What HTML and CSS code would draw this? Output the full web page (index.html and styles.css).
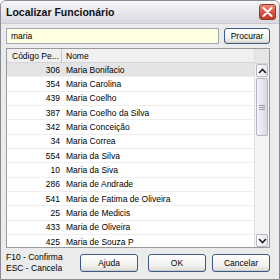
FILE: index.html
```html
<!DOCTYPE html>
<html lang="pt">
<head>
<meta charset="utf-8">
<title>Localizar Funcionário</title>
<link rel="stylesheet" href="styles.css">
</head>
<body>
<div class="window">
  <div class="titlebar">
    <span class="title">Localizar Funcionário</span>
    <span class="close">
      <svg width="11" height="10" viewBox="0 0 11 10"><path d="M1.5 1 L9.5 9 M9.5 1 L1.5 9" stroke="#fff" stroke-width="2" stroke-linecap="round"/></svg>
    </span>
  </div>
  <div class="content">
    <div class="search">
      <div class="input">maria</div>
      <div class="btn btn-search">Procurar</div>
    </div>
    <div class="list">
      <div class="table">
        <div class="header">
          <div class="hcell hcode">Código Pe...</div>
          <div class="hcell hname">Nome</div>
        </div>
        <div class="rows">
          <div class="row sel"><span class="code">306</span><span class="name">Maria Bonifacio</span></div>
          <div class="row"><span class="code">354</span><span class="name">Maria Carolina</span></div>
          <div class="row"><span class="code">439</span><span class="name">Maria Coelho</span></div>
          <div class="row"><span class="code">387</span><span class="name">Maria Coelho da Silva</span></div>
          <div class="row"><span class="code">342</span><span class="name">Maria Conceição</span></div>
          <div class="row"><span class="code">34</span><span class="name">Maria Correa</span></div>
          <div class="row"><span class="code">554</span><span class="name">Maria da Silva</span></div>
          <div class="row"><span class="code">10</span><span class="name">Maria da Siva</span></div>
          <div class="row"><span class="code">286</span><span class="name">Maria de Andrade</span></div>
          <div class="row"><span class="code">541</span><span class="name">Maria de Fatima de Oliveira</span></div>
          <div class="row"><span class="code">25</span><span class="name">Maria de Medicis</span></div>
          <div class="row"><span class="code">433</span><span class="name">Maria de Oliveira</span></div>
          <div class="row"><span class="code">425</span><span class="name">Maria de Souza P</span></div>
        </div>
      </div>
      <div class="scrollbar">
        <div class="sb-top"></div>
        <div class="sb-btn">
          <svg width="9" height="6" viewBox="0 0 9 6"><path d="M1 5 L4.5 1.5 L8 5" fill="none" stroke="#222" stroke-width="1.6"/></svg>
        </div>
        <div class="sb-track">
          <div class="thumb"><span class="grip"></span></div>
        </div>
        <div class="sb-btn">
          <svg width="9" height="6" viewBox="0 0 9 6"><path d="M1 1 L4.5 4.5 L8 1" fill="none" stroke="#222" stroke-width="1.6"/></svg>
        </div>
      </div>
    </div>
    <div class="footer">
      <div class="hints">
        <div>F10 - Confirma</div>
        <div>ESC - Cancela</div>
      </div>
      <div class="btn btn-ajuda">Ajuda</div>
      <div class="btn btn-ok">OK</div>
      <div class="btn btn-cancel">Cancelar</div>
    </div>
  </div>
</div>
</body>
</html>
```
FILE: styles.css
```css
html, body {
  margin: 0;
  padding: 0;
  background: #ffffff;
}
body {
  font-family: "Liberation Sans", Arial, sans-serif;
  font-size: 8.5px;
  color: #000;
}
.window {
  width: 280px;
  height: 280px;
  box-sizing: border-box;
  border: 1px solid #8a8a92;
  border-radius: 6px 6px 0 0;
  background: #ebebeb;
  display: flex;
  flex-direction: column;
  overflow: hidden;
}
.titlebar {
  height: 22px;
  flex: none;
  display: flex;
  align-items: center;
  justify-content: space-between;
  padding: 0 3px 0 5px;
  background: linear-gradient(#f7f7f9, #e4e4ea 60%, #d8d8e0);
  border-bottom: 1px solid #c8c8d0;
}
.title {
  font-weight: bold;
  font-size: 10.5px;
  color: #111;
}
.close {
  width: 17px;
  height: 16px;
  box-sizing: border-box;
  border: 1px solid #8c3b30;
  border-radius: 3px;
  background: linear-gradient(#f08a78, #d9503c 55%, #c33b28);
  display: flex;
  align-items: center;
  justify-content: center;
}
.content {
  flex: 1;
  display: flex;
  flex-direction: column;
  padding: 4px 9px 3px 5px;
  min-height: 0;
}
.search {
  display: flex;
  gap: 5px;
  height: 16px;
  flex: none;
}
.input {
  flex: 1;
  box-sizing: border-box;
  border: 1px solid #a4a8b0;
  background: #ffffe1;
  padding-left: 4px;
  display: flex;
  align-items: center;
}
.btn {
  box-sizing: border-box;
  border: 1px solid #3c5a88;
  border-radius: 3px;
  background: linear-gradient(#ffffff, #f3f3f0 60%, #dedcd6);
  display: flex;
  align-items: center;
  justify-content: center;
  box-shadow: inset 0 -1px 0 #d0cec8;
}
.btn-search {
  width: 46px;
}
.list {
  flex: 1;
  margin-top: 4px;
  border: 1px solid #9a9a9a;
  background: #fff;
  display: flex;
  min-height: 0;
  overflow: hidden;
}
.table {
  flex: 1;
  display: flex;
  flex-direction: column;
  overflow: hidden;
}
.header {
  height: 13px;
  flex: none;
  display: flex;
  background: #f0f0f0;
  border-bottom: 1px solid #d4d4d4;
}
.hcell {
  display: flex;
  align-items: center;
}
.hcode {
  width: 55px;
  padding-left: 5px;
  box-sizing: border-box;
  border-right: 1px solid #c8c8c8;
}
.hname {
  padding-left: 4px;
}
.rows {
  flex: 1;
  overflow: hidden;
}
.row {
  height: 14.33px;
  box-sizing: border-box;
  display: flex;
  align-items: center;
  border-bottom: 1px solid #eeeeee;
  white-space: nowrap;
}
.row.sel {
  background: #e4e4e4;
}
.code {
  width: 53px;
  text-align: right;
  flex: none;
}
.name {
  padding-left: 6px;
}
.scrollbar {
  width: 14px;
  flex: none;
  display: flex;
  flex-direction: column;
  background: #f3f3f3;
  border-left: 1px solid #e0e0e0;
}
.sb-top {
  height: 14px;
  flex: none;
  background: #e6e6e6;
  border-bottom: 1px solid #d4d4d4;
}
.sb-btn {
  height: 13px;
  flex: none;
  box-sizing: border-box;
  margin: 0 1px;
  border: 1px solid #b8b8c0;
  border-radius: 2px;
  background: linear-gradient(90deg, #ffffff, #e6e6ec);
  display: flex;
  align-items: center;
  justify-content: center;
}
.sb-track {
  flex: 1;
  padding: 1px 1px;
}
.thumb {
  height: 58px;
  box-sizing: border-box;
  border: 1px solid #b4b4c4;
  border-radius: 2px;
  background: linear-gradient(90deg, #f4f4f8, #d8d8e4);
  display: flex;
  align-items: center;
  justify-content: center;
}
.grip {
  width: 6px;
  height: 5px;
  background: repeating-linear-gradient(#9a9aaa 0 1px, transparent 1px 2px);
}
.footer {
  flex: none;
  height: 26px;
  display: flex;
  align-items: center;
  gap: 6px;
  padding-top: 2px;
}
.hints {
  flex: 1;
  line-height: 11px;
}
.footer .btn {
  width: 58px;
  height: 18px;
}
.footer .btn-ajuda {
  margin-right: 4px;
}
```
